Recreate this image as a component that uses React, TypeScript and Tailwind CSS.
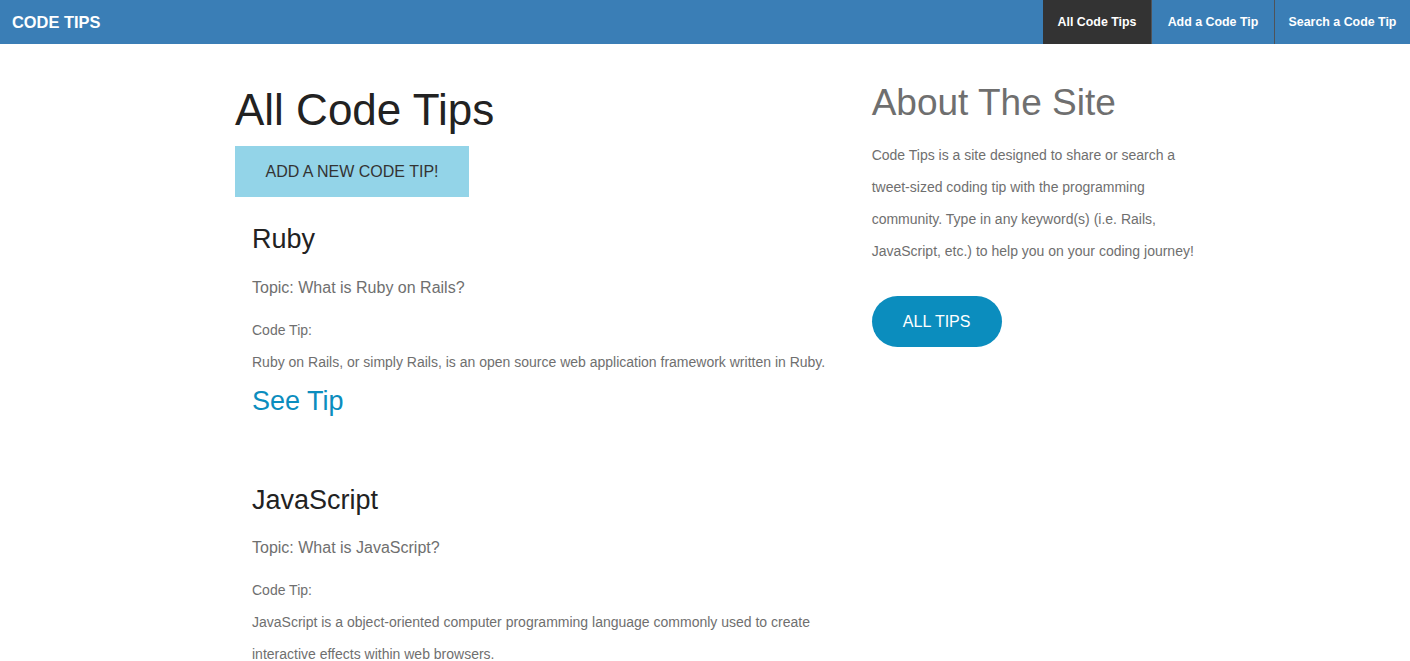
import React from "react";

const tips = [
  {
    id: 1,
    language: "Ruby",
    topic: "What is Ruby on Rails?",
    body: "Ruby on Rails, or simply Rails, is an open source web application framework written in Ruby.",
  },
  {
    id: 2,
    language: "JavaScript",
    topic: "What is JavaScript?",
    body: "JavaScript is a object-oriented computer programming language commonly used to create interactive effects within web browsers.",
  },
];

const navs = [
  { label: "All Code Tips", width: "w-[108px]", active: true },
  { label: "Add a Code Tip", width: "w-[123px]", active: false },
  { label: "Search a Code Tip", width: "w-[136px]", active: false },
];

export default function App() {
  return (
    <div className="min-h-screen bg-white font-['Liberation_Sans',Arial,sans-serif]">
      {/* Top bar */}
      <nav className="flex h-[44px] items-center justify-between bg-[#3a7eb6]">
        <a className="pl-[12px] text-[16.4px] font-bold text-white">CODE TIPS</a>
        <ul className="flex h-full">
          {navs.map((nav, i) => (
            <li
              key={nav.label}
              className={`${nav.width} flex h-full items-center justify-center text-[12.4px] font-bold text-white ${
                nav.active ? "bg-[#333333]" : ""
              } ${i > 0 ? "border-l border-[#4f5358]" : ""}`}
            >
              {nav.label}
            </li>
          ))}
        </ul>
      </nav>

      {/* Main row */}
      <div className="mx-auto flex w-[1000px]">
        {/* Tips column */}
        <div className="w-2/3 pl-[30px]">
          <h1 className="mt-[42px] text-[44px] leading-[48px] text-[#222222]">All Code Tips</h1>
          <button className="mt-[12px] h-[51px] w-[234px] bg-[#93d4e8] text-[16px] text-[#333333]">
            ADD A NEW CODE TIP!
          </button>

          {tips.map((tip, i) => (
            <div key={tip.id} className={`pl-[17px] ${i === 0 ? "mt-[26px]" : "mt-[67px]"}`}>
              <h3 className="text-[27px] leading-[32px] text-[#222222]">{tip.language}</h3>
              <h5 className="mt-[22.5px] text-[16px] leading-[20px] text-[#6f6f6f]">Topic: {tip.topic}</h5>
              <p className="mt-[16px] text-[14px] leading-[32px] text-[#6f6f6f]">Code Tip:</p>
              <p className="text-[14px] leading-[32px] text-[#6f6f6f]">{tip.body}</p>
              <a className="mt-[7px] block text-[27px] leading-[32px] text-[#0b8dbe]">See Tip</a>
            </div>
          ))}
        </div>

        {/* About column */}
        <div className="w-1/3">
          <h2 className="mt-[37px] text-[37px] leading-[44px] text-[#6f6f6f]">About The Site</h2>
          <p className="mt-[14px] text-[14px] leading-[32px] text-[#6f6f6f]">
            Code Tips is a site designed to share or search a tweet-sized coding tip with the programming
            community. Type in any keyword(s) (i.e. Rails, JavaScript, etc.) to help you on your coding journey!
          </p>
          <button className="mt-[29px] h-[51px] w-[130px] rounded-full bg-[#0b8dbe] text-[16px] text-white">
            ALL TIPS
          </button>
        </div>
      </div>
    </div>
  );
}
